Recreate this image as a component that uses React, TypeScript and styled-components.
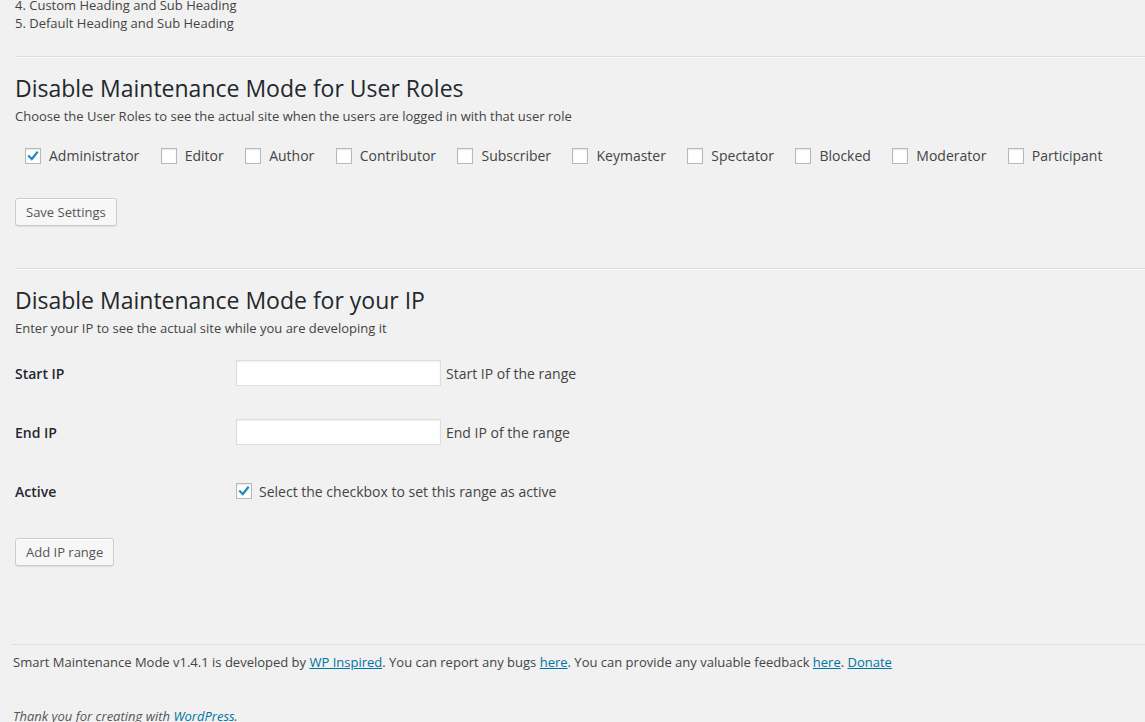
import React from "react";
import styled, { createGlobalStyle } from "styled-components";

const GlobalStyle = createGlobalStyle`
  html, body {
    margin: 0;
    padding: 0;
    background: #f1f1f1;
  }
  body {
    font-family: "Open Sans", "Liberation Sans", sans-serif;
    font-size: 13px;
    color: #444;
    overflow: hidden;
  }
`;

const roles = [
  { name: "Administrator", checked: true },
  { name: "Editor", checked: false },
  { name: "Author", checked: false },
  { name: "Contributor", checked: false },
  { name: "Subscriber", checked: false },
  { name: "Keymaster", checked: false },
  { name: "Spectator", checked: false },
  { name: "Blocked", checked: false },
  { name: "Moderator", checked: false },
  { name: "Participant", checked: false },
];

function Check({ checked }: { checked?: boolean }) {
  return (
    <Box>
      {checked && (
        <svg width="14" height="14" viewBox="0 0 14 14">
          <path d="M3 7.2 L5.8 10 L11 3.6" fill="none" stroke="#1e8cbe" strokeWidth="2.2" strokeLinecap="square" />
        </svg>
      )}
    </Box>
  );
}

export default function App() {
  return (
    <>
      <GlobalStyle />
      <Page>
        <Intro>
          <div>4. Custom Heading and Sub Heading</div>
          <div>5. Default Heading and Sub Heading</div>
        </Intro>

        <Divider />

        <Heading>Disable Maintenance Mode for User Roles</Heading>
        <Description>Choose the User Roles to see the actual site when the users are logged in with that user role</Description>

        <RoleRow>
          {roles.map((r) => (
            <RoleLabel key={r.name}>
              <Check checked={r.checked} />
              {r.name}
            </RoleLabel>
          ))}
        </RoleRow>

        <Button $top={34}>Save Settings</Button>

        <Divider $top={42} />

        <Heading>Disable Maintenance Mode for your IP</Heading>
        <Description>Enter your IP to see the actual site while you are developing it</Description>

        <FormTable>
          <FormRow>
            <FieldName>Start IP</FieldName>
            <FieldCell>
              <TextInput />
              <Hint>Start IP of the range</Hint>
            </FieldCell>
          </FormRow>
          <FormRow>
            <FieldName>End IP</FieldName>
            <FieldCell>
              <TextInput />
              <Hint>End IP of the range</Hint>
            </FieldCell>
          </FormRow>
          <FormRow>
            <FieldName>Active</FieldName>
            <FieldCell>
              <Check checked />
              <Hint $gap={7}>Select the checkbox to set this range as active</Hint>
            </FieldCell>
          </FormRow>
        </FormTable>

        <Button $top={34}>Add IP range</Button>
      </Page>

      <Footer>
        <FooterLine>
          Smart Maintenance Mode v1.4.1 is developed by <Link>WP Inspired</Link>. You can report any bugs{" "}
          <Link>here</Link>. You can provide any valuable feedback <Link>here</Link>. <Link>Donate</Link>
        </FooterLine>
        <Thanks>
          Thank you for creating with <PlainLink>WordPress</PlainLink>.
        </Thanks>
      </Footer>
    </>
  );
}

const Page = styled.div`
  padding-left: 15px;
  display: flex;
  flex-direction: column;
  align-items: flex-start;
`;

const Intro = styled.div`
  margin-top: -4px;
  line-height: 18px;
`;

const Divider = styled.div<{ $top?: number }>`
  align-self: stretch;
  margin-top: ${(p) => p.$top ?? 24}px;
  height: 1px;
  background: #dedede;
  border-bottom: 1px solid #fafafa;
`;

const Heading = styled.h3`
  margin: 16px 0 0;
  font-size: 23px;
  font-weight: 400;
  line-height: 29px;
  color: #23282d;
`;

const Description = styled.p`
  margin: 4px 0 0;
  line-height: 18px;
`;

const RoleRow = styled.div`
  margin-top: 23px;
  padding-left: 10px;
  display: flex;
  align-items: center;
  gap: 21.4px;
  font-size: 14px;
`;

const RoleLabel = styled.label`
  display: flex;
  align-items: center;
  gap: 8px;
  color: #444;
  line-height: 16px;
`;

const Box = styled.span`
  width: 16px;
  height: 16px;
  box-sizing: border-box;
  border: 1px solid #b4b9be;
  background: #fff;
  box-shadow: inset 0 1px 2px rgba(0, 0, 0, 0.1);
  display: flex;
  align-items: center;
  justify-content: center;
  flex-shrink: 0;
`;

const Button = styled.button<{ $top: number }>`
  margin-top: ${(p) => p.$top}px;
  height: 28px;
  padding: 0 10px;
  font-family: "Open Sans", "Liberation Sans", sans-serif;
  font-size: 13px;
  color: #555;
  background: #f7f7f7;
  border: 1px solid #ccc;
  border-radius: 3px;
  box-shadow: inset 0 1px 0 #fff, 0 1px 0 rgba(0, 0, 0, 0.08);
`;

const FormTable = styled.div`
  margin-top: 23px;
  display: flex;
  flex-direction: column;
  gap: 33px;
`;

const FormRow = styled.div`
  display: flex;
  align-items: center;
  height: 26px;
`;

const FieldName = styled.div`
  width: 221px;
  font-size: 14px;
  font-weight: 600;
  color: #23282d;
`;

const FieldCell = styled.div`
  display: flex;
  align-items: center;
`;

const TextInput = styled.input`
  width: 205px;
  height: 26px;
  box-sizing: border-box;
  border: 1px solid #ddd;
  background: #fff;
  box-shadow: inset 0 1px 2px rgba(0, 0, 0, 0.07);
  margin: 0;
`;

const Hint = styled.span<{ $gap?: number }>`
  margin-left: ${(p) => p.$gap ?? 5}px;
  font-size: 14px;
  color: #444;
`;

const Footer = styled.div`
  margin-top: 78px;
  padding-left: 12px;
  display: flex;
  flex-direction: column;
`;

const FooterLine = styled.div`
  border-top: 1px solid #dedede;
  padding: 8px 0 0 1px;
  line-height: 18px;
`;

const Link = styled.a`
  color: #0074a2;
  text-decoration: underline;
`;

const PlainLink = styled.a`
  color: #0074a2;
  text-decoration: none;
`;

const Thanks = styled.div`
  margin-top: 36px;
  padding-left: 1px;
  font-style: italic;
  line-height: 18px;
  color: #555;
`;
